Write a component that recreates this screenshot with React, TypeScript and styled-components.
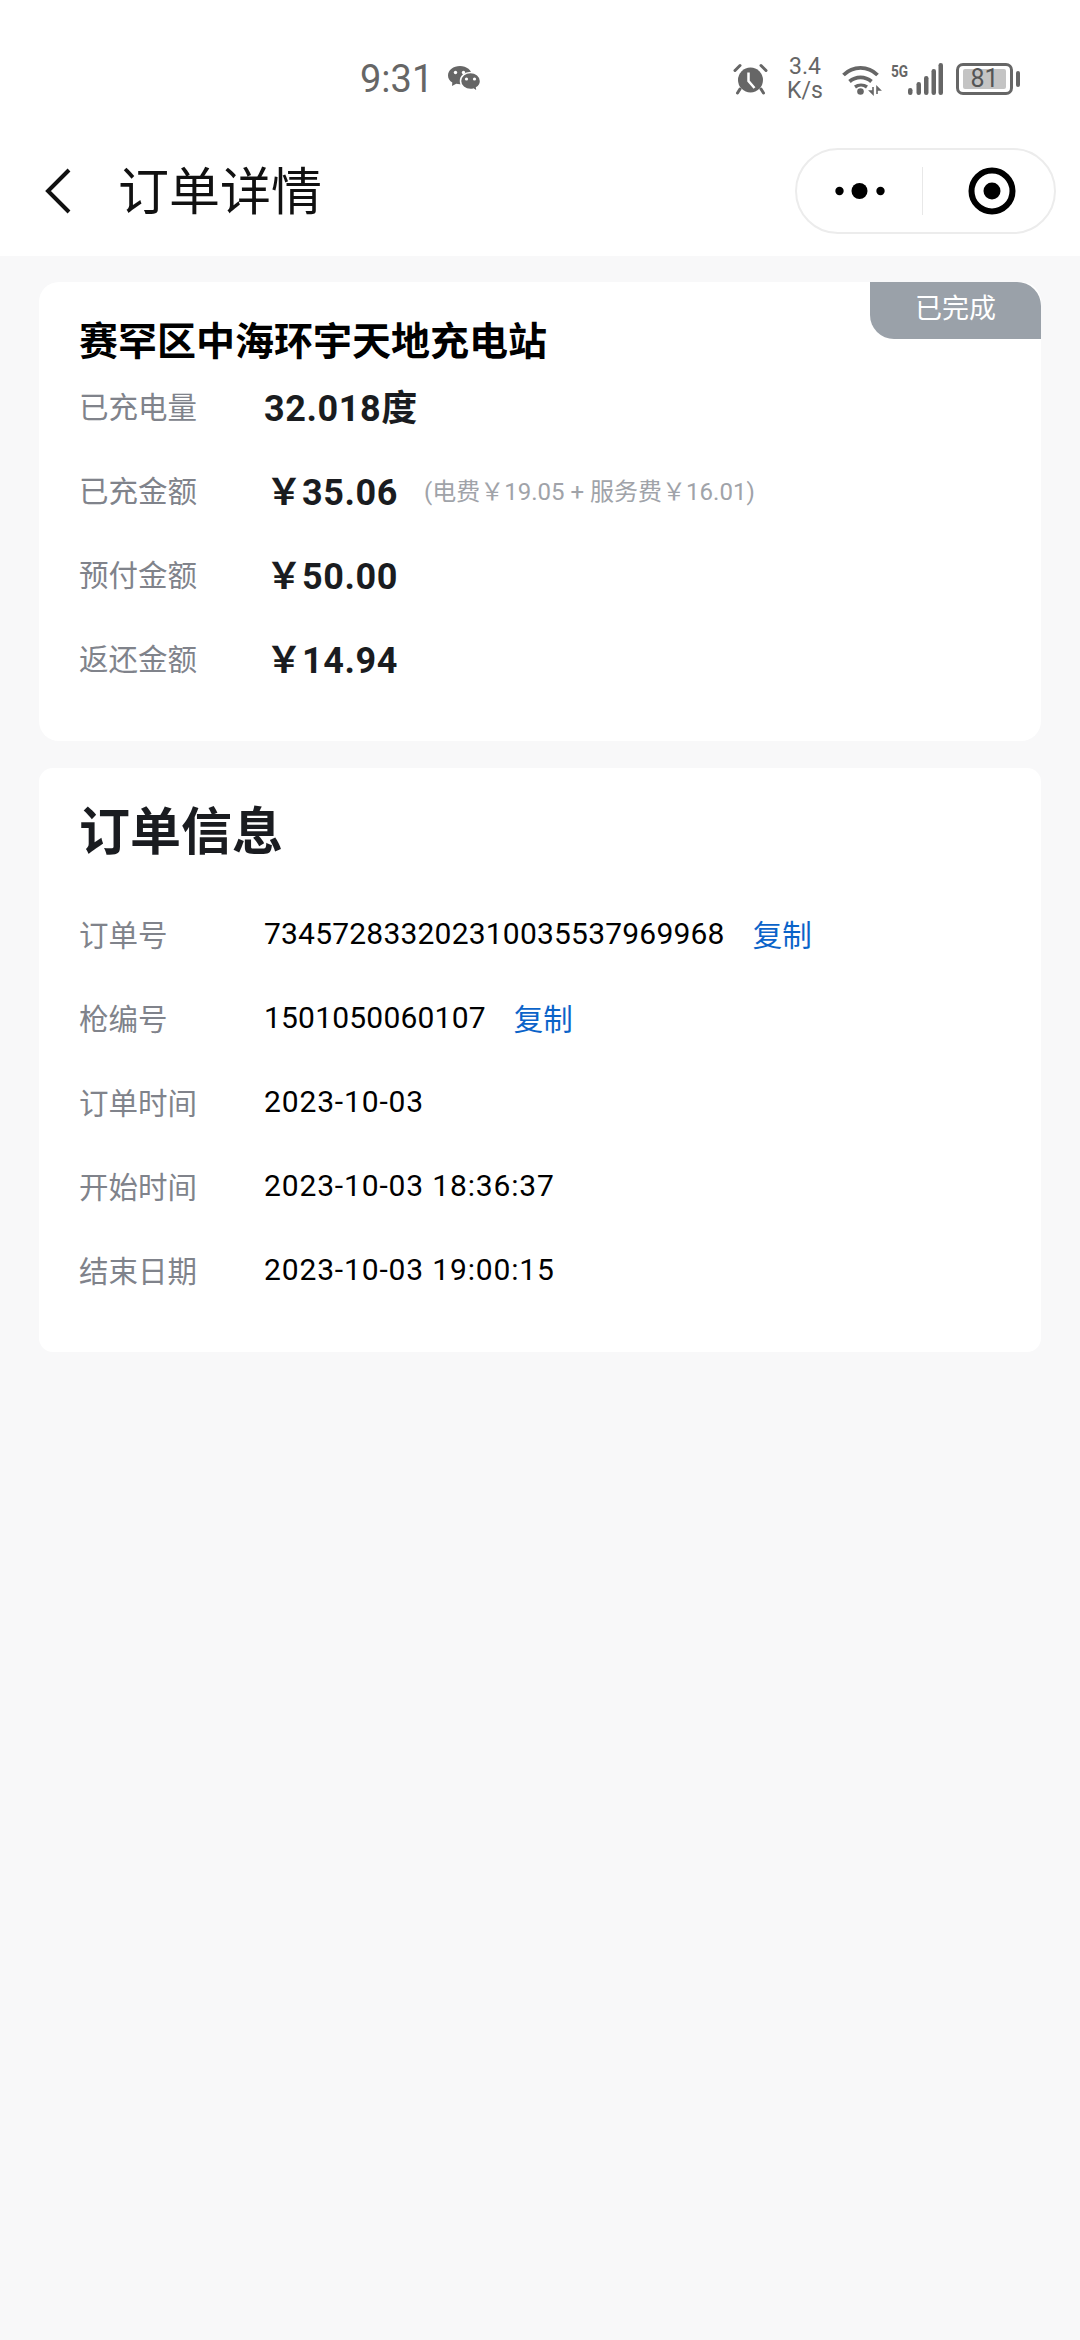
import React, { FC } from "react";
import styled, { createGlobalStyle } from "styled-components";

const GlobalStyle = createGlobalStyle`
  html, body {
    margin: 0;
    padding: 0;
    background: #f8f8f9;
  }
  * {
    box-sizing: border-box;
  }
  body {
    font-family: Roboto, "Noto Sans CJK SC", sans-serif;
  }
`;

const Page = styled.div`
  width: 1080px;
  height: 2340px;
  background: #f8f8f9;
  overflow: hidden;
`;

const Top = styled.header`
  height: 256px;
  background: #fff;
  display: flex;
  flex-direction: column;
`;

const StatusBar = styled.div`
  height: 148px;
  padding: 57px 60px 0 360px;
  display: flex;
  align-items: flex-start;
`;

const Time = styled.div`
  font-size: 38px;
  line-height: 44px;
  color: #666;
`;

const WeChatSlot = styled.div`
  height: 44px;
  margin-left: 15px;
  display: flex;
  align-items: center;
`;

const StatusIcons = styled.div`
  margin-left: auto;
  display: flex;
  align-items: center;
  height: 44px;
  gap: 11px;
`;

const Speed = styled.div`
  width: 52px;
  font-size: 23px;
  line-height: 24px;
  text-align: center;
  color: #666;
`;

const SignalGroup = styled.div`
  display: flex;
  align-items: flex-start;
  height: 32px;
`;

const NetworkType = styled.span`
  width: 17px;
  font-size: 17px;
  line-height: 17px;
  font-weight: 700;
  color: #666;
  transform: scaleX(0.8);
  transform-origin: left center;
`;

const Battery = styled.div`
  position: relative;
  width: 57px;
  height: 32px;
  margin: 0 7px 0 2px;
  padding: 3px 4px;
  border: 3px solid #666;
  border-radius: 7px;
  display: flex;

  &::after {
    content: "";
    position: absolute;
    top: 5px;
    right: -10px;
    width: 4px;
    height: 16px;
    border-radius: 2px;
    background: #666;
  }
`;

const BatteryFill = styled.div`
  flex: 1;
  background: #c4c4c4;
  border-radius: 2px;
  font-size: 25px;
  line-height: 20px;
  text-align: center;
  color: #555;
`;

const NavBar = styled.div`
  display: flex;
  align-items: center;
  height: 86px;
  padding: 0 24px 0 43px;
`;

const BackButton = styled.div`
  width: 75px;
  display: flex;
  align-items: center;
`;

const Title = styled.h1`
  margin: 0;
  padding-bottom: 7px;
  font-size: 51px;
  font-weight: 400;
  color: #111;
`;

const Capsule = styled.div`
  margin-left: auto;
  width: 261px;
  height: 86px;
  border: 2px solid #ececec;
  border-radius: 43px;
  display: flex;
  align-items: center;
`;

const CapsuleSlot = styled.div<{ $inset?: number }>`
  flex: 1;
  display: flex;
  justify-content: center;
  align-items: center;
  padding-left: ${({ $inset }) => $inset ?? 0}px;
`;

const CapsuleDivider = styled.div`
  width: 1px;
  height: 48px;
  background: #e8e8e8;
`;

const Content = styled.main`
  padding: 26px 39px 0;
  display: flex;
  flex-direction: column;
  gap: 27px;
`;

const Card = styled.section`
  position: relative;
  background: #fff;
  border-radius: 20px;
  overflow: hidden;
`;

const SummaryCard = styled(Card)`
  height: 459px;
  padding: 39px 40px 0;
`;

const InfoCard = styled(Card)`
  height: 584px;
  padding: 31px 40px 0;
  border-radius: 14px;
`;

const StatusTag = styled.div`
  position: absolute;
  top: 0;
  right: 0;
  width: 171px;
  height: 57px;
  background: #9aa1a9;
  border-radius: 0 24px 0 24px;
  color: #fff;
  font-size: 27px;
  line-height: 55px;
  text-align: center;
`;

const StationName = styled.h2`
  margin: 0;
  font-size: 39px;
  line-height: 42px;
  font-weight: 700;
  color: #000;
`;

const SectionTitle = styled.h2`
  margin: 0 0 24px;
  font-size: 51px;
  line-height: 68px;
  font-weight: 700;
  color: #1a1c20;
`;

const Row = styled.div`
  display: flex;
  align-items: center;
  height: 84px;
`;

const Label = styled.div`
  width: 185px;
  font-size: 29.5px;
  color: #80838b;
`;

const Amount = styled.div`
  font-size: 36px;
  font-weight: 700;
  letter-spacing: 0.6px;
  color: #1a1c20;
`;

const Currency = styled.span`
  margin-left: 2px;
  letter-spacing: 0;
`;

const Breakdown = styled.div`
  margin-left: 26px;
  font-size: 24px;
  color: #a0a3a9;
`;

const Value = styled.div`
  font-size: 30px;
  letter-spacing: 0.2px;
  color: #000;
`;

const DateValue = styled(Value)`
  letter-spacing: 0.85px;
`;

const CopyLink = styled.span`
  margin-left: 28px;
  font-size: 29.5px;
  color: #0a63c9;
`;

const WeChatIcon: FC = () => (
  <svg width="33" height="26" viewBox="0 0 33 26" fill="#666">
    <path d="M12 0C5.400 0 0 4 0 9.400c0 3 1.700 5.400 4.300 7L4 20l4.200-2.200c1.200.3 2.500.5 3.800.5 6.600 0 12-4 12-8.900S18.600 0 12 0z" />
    <path d="M32.500 15c0-4.800-4.600-8.500-10-8.500s-10 3.700-10 8.500 4.600 8.500 10 8.500c1 0 2-.1 2.900-.4l3.800 2.600-.6-4c2.400-1.500 3.900-3.800 3.900-6.200z" stroke="#fff" strokeWidth="1.500" />
    <circle cx="7.500" cy="6.500" r="1.700" fill="#fff" />
    <circle cx="15.500" cy="6.500" r="1.700" fill="#fff" />
    <circle cx="18.500" cy="13" r="1.600" fill="#fff" />
    <circle cx="26.500" cy="13" r="1.600" fill="#fff" />
  </svg>
);

const AlarmIcon: FC = () => (
  <svg width="35" height="32" viewBox="0 0 35 32" fill="none">
    <circle cx="17.500" cy="17" r="12.500" fill="#666" />
    <path d="M15.500 9.500v8.500l6 7" stroke="#fff" strokeWidth="2.500" />
    <path d="M2 7.500L7 2.500M33 7.500L28 2.500" stroke="#666" strokeWidth="3" strokeLinecap="round" />
    <path d="M7 26l-2.500 4M28 26l2.500 4" stroke="#666" strokeWidth="3" strokeLinecap="round" />
  </svg>
);

const WifiIcon: FC = () => (
  <svg width="38" height="32" viewBox="0 0 38 32" fill="none" stroke="#666" strokeWidth="3.800" overflow="visible">
    <path d="M1.500 12C11 2.500 26 2.500 35.500 12" />
    <path d="M7.500 18.500c6.500-5.500 15.500-5.500 22 0" />
    <path d="M13 24c3.500-2.500 8.500-2.500 12 0" strokeWidth="3.400" />
    <circle cx="18.500" cy="28.500" r="3.300" fill="#666" stroke="none" />
    <path d="M31 24v7l-3-3h3M35 31v-7l3 3h-3" strokeWidth="1.600" />
  </svg>
);

const SignalBars: FC = () => (
  <svg width="35" height="32" viewBox="0 0 35 32" fill="#666">
    <rect x="0" y="25" width="4.500" height="7" rx="2.200" />
    <rect x="8.500" y="19" width="4.500" height="13" rx="2.200" />
    <rect x="16" y="13" width="4.500" height="19" rx="2.200" />
    <rect x="23.500" y="6" width="4.500" height="26" rx="2.200" />
    <rect x="30.500" y="0" width="4.500" height="32" rx="2.200" />
  </svg>
);

const BackIcon: FC = () => (
  <svg width="28" height="46" viewBox="0 0 28 46" fill="none" stroke="#111" strokeWidth="4">
    <path d="M26 2L5 23l21 21" />
  </svg>
);

const MoreIcon: FC = () => (
  <svg width="50" height="18" viewBox="0 0 50 18" fill="#000">
    <circle cx="4.500" cy="9" r="4.200" />
    <circle cx="24.500" cy="9" r="8" />
    <circle cx="45.500" cy="9" r="4.200" />
  </svg>
);

const CloseIcon: FC = () => (
  <svg width="48" height="48" viewBox="0 0 48 48">
    <circle cx="24" cy="24" r="20.500" fill="none" stroke="#000" strokeWidth="6" />
    <circle cx="24" cy="24" r="8.500" fill="#000" />
  </svg>
);

const App: FC = () => {
  return (
    <Page>
      <GlobalStyle />
      <Top>
        <StatusBar>
          <Time>9:31</Time>
          <WeChatSlot>
            <WeChatIcon />
          </WeChatSlot>
          <StatusIcons>
            <AlarmIcon />
            <Speed>
              3.4
              <br />
              K/s
            </Speed>
            <WifiIcon />
            <SignalGroup>
              <NetworkType>5G</NetworkType>
              <SignalBars />
            </SignalGroup>
            <Battery>
              <BatteryFill>81</BatteryFill>
            </Battery>
          </StatusIcons>
        </StatusBar>
        <NavBar>
          <BackButton>
            <BackIcon />
          </BackButton>
          <Title>订单详情</Title>
          <Capsule>
            <CapsuleSlot>
              <MoreIcon />
            </CapsuleSlot>
            <CapsuleDivider />
            <CapsuleSlot $inset={6}>
              <CloseIcon />
            </CapsuleSlot>
          </Capsule>
        </NavBar>
      </Top>
      <Content>
        <SummaryCard>
          <StatusTag>已完成</StatusTag>
          <StationName>赛罕区中海环宇天地充电站</StationName>
          <Row>
            <Label>已充电量</Label>
            <Amount>32.018度</Amount>
          </Row>
          <Row>
            <Label>已充金额</Label>
            <Amount>
              <Currency>￥</Currency>35.06
            </Amount>
            <Breakdown>(电费￥19.05 + 服务费￥16.01)</Breakdown>
          </Row>
          <Row>
            <Label>预付金额</Label>
            <Amount>
              <Currency>￥</Currency>50.00
            </Amount>
          </Row>
          <Row>
            <Label>返还金额</Label>
            <Amount>
              <Currency>￥</Currency>14.94
            </Amount>
          </Row>
        </SummaryCard>
        <InfoCard>
          <SectionTitle>订单信息</SectionTitle>
          <Row>
            <Label>订单号</Label>
            <Value>734572833202310035537969968</Value>
            <CopyLink>复制</CopyLink>
          </Row>
          <Row>
            <Label>枪编号</Label>
            <Value>1501050060107</Value>
            <CopyLink>复制</CopyLink>
          </Row>
          <Row>
            <Label>订单时间</Label>
            <DateValue>2023-10-03</DateValue>
          </Row>
          <Row>
            <Label>开始时间</Label>
            <DateValue>2023-10-03 18:36:37</DateValue>
          </Row>
          <Row>
            <Label>结束日期</Label>
            <DateValue>2023-10-03 19:00:15</DateValue>
          </Row>
        </InfoCard>
      </Content>
    </Page>
  );
};

export default App;
